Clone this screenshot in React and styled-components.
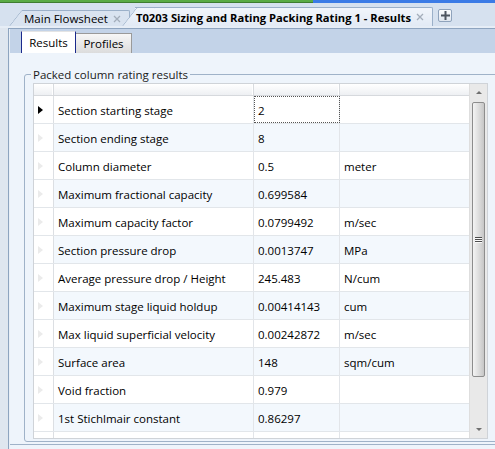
import React from 'react';
import styled, { createGlobalStyle } from 'styled-components';

const GlobalStyle = createGlobalStyle`
  html, body {
    margin: 0;
    padding: 0;
    overflow: hidden;
    background: #d6e1ef;
  }
  body {
    font-family: 'Open Sans', 'Noto Sans', sans-serif;
    font-size: 11px;
    color: #000;
  }
  * {
    box-sizing: border-box;
  }
`;

const rows = [
  { name: 'Section starting stage', value: '2', unit: '' },
  { name: 'Section ending stage', value: '8', unit: '' },
  { name: 'Column diameter', value: '0.5', unit: 'meter' },
  { name: 'Maximum fractional capacity', value: '0.699584', unit: '' },
  { name: 'Maximum capacity factor', value: '0.0799492', unit: 'm/sec' },
  { name: 'Section pressure drop', value: '0.0013747', unit: 'MPa' },
  { name: 'Average pressure drop / Height', value: '245.483', unit: 'N/cum' },
  { name: 'Maximum stage liquid holdup', value: '0.00414143', unit: 'cum' },
  { name: 'Max liquid superficial velocity', value: '0.00242872', unit: 'm/sec' },
  { name: 'Surface area', value: '148', unit: 'sqm/cum' },
  { name: 'Void fraction', value: '0.979', unit: '' },
  { name: '1st Stichlmair constant', value: '0.86297', unit: '' },
  // only the top edge of this row shows below the last full one
  { name: '', value: '', unit: '' },
];

function Close() {
  return (
    <svg width="8" height="8" viewBox="0 0 8 8">
      <path d="M1 1 L7 7 M7 1 L1 7" stroke="#a3adba" strokeWidth="1.3" />
    </svg>
  );
}

function App() {
  return (
    <>
      <GlobalStyle />
      <Window>
        <Progress>
          <Green />
          <Blue />
        </Progress>
        <DocStrip>
          <DocTab>
            Main Flowsheet
            <Close />
          </DocTab>
          <DocTab active>
            T0203 Sizing and Rating Packing Rating 1 - Results
            <Close />
          </DocTab>
          <PlusButton>
            <svg width="11" height="11" viewBox="0 0 11 11">
              <path d="M5.5 1 V10 M1 5.5 H10" stroke="#4d5560" strokeWidth="2" />
            </svg>
          </PlusButton>
        </DocStrip>
        <DocGap />
        <Body>
          <Frame>
            <TabStrip>
              <Tab selected>Results</Tab>
              <Tab>Profiles</Tab>
            </TabStrip>
            <Panel>
              <Group>
                <Legend>Packed column rating results</Legend>
                <Grid>
                  <Table>
                    <HeaderRow>
                      <HeaderCell width={20} />
                      <HeaderCell width={200} />
                      <HeaderCell width={86} />
                      <HeaderCell width={128} last />
                    </HeaderRow>
                    {rows.map((r, i) => (
                      <Row key={i} alt={i % 2 === 1}>
                        <RowHead>
                          <Marker current={i === 0} />
                        </RowHead>
                        <Cell width={200}>{r.name}</Cell>
                        <Cell width={86} focused={i === 0}>{r.value}</Cell>
                        <Cell width={128} last>{r.unit}</Cell>
                      </Row>
                    ))}
                  </Table>
                  <ScrollBar>
                    <Arrow>
                      <ArrowGlyph up />
                    </Arrow>
                    <Track>
                      <Thumb>
                        <Grip>
                          <span />
                          <span />
                          <span />
                        </Grip>
                      </Thumb>
                    </Track>
                    <Arrow>
                      <ArrowGlyph />
                    </Arrow>
                  </ScrollBar>
                </Grid>
              </Group>
              <PanelEdge />
            </Panel>
          </Frame>
        </Body>
      </Window>
    </>
  );
}

const Window = styled.div`
  width: 495px;
  height: 449px;
  display: flex;
  flex-direction: column;
  overflow: hidden;
`;

const Progress = styled.div`
  display: flex;
  height: 3px;
`;

const Green = styled.div`
  width: 313px;
  background: #5aab45;
  border-bottom: 1px solid #3e7d30;
`;

const Blue = styled.div`
  flex: 1;
  background: #3b7be6;
`;

const DocStrip = styled.div`
  height: 23px;
  display: flex;
  align-items: flex-end;
  padding-left: 22px;
  background: #d6e1ef;
`;

const DocTab = styled.div`
  position: relative;
  z-index: ${(p) => (p.active ? 2 : 1)};
  height: ${(p) => (p.active ? 19 : 16)}px;
  margin-left: ${(p) => (p.active ? 5 : 0)}px;
  padding: 0 8px 0 ${(p) => (p.active ? 1 : 2)}px;
  display: flex;
  align-items: center;
  gap: 5px;
  font-size: ${(p) => (p.active ? 11.2 : 11.5)}px;
  font-weight: ${(p) => (p.active ? 700 : 400)};
  color: #000;
  white-space: nowrap;
  background: ${(p) => (p.active ? 'linear-gradient(#f1f5fb, #e2eaf5)' : '#d9e3f0')};
  border-top: 1px solid #9bb0c9;
  border-right: 1px solid #9bb0c9;
  border-top-right-radius: 2px;

  &::before {
    content: '';
    position: absolute;
    z-index: -1;
    left: -13px;
    top: -1px;
    bottom: 0;
    width: 18px;
    background: inherit;
    border-top: 1px solid #9bb0c9;
    border-left: 1px solid #9bb0c9;
    border-top-left-radius: 2px;
    transform-origin: bottom left;
    transform: skewX(-38deg);
  }
`;

const PlusButton = styled.div`
  width: 14px;
  height: 13px;
  margin: 0 0 4px 5px;
  display: flex;
  align-items: center;
  justify-content: center;
  border: 1px solid #8fa3bc;
  border-radius: 2px;
  background: linear-gradient(#fbfcfe, #dfe6ef);
`;

const DocGap = styled.div`
  height: 2px;
  background: #e6edf6;
`;

const Body = styled.div`
  flex: 1;
  display: flex;
  padding-left: 8px;
  background: #dfe6ef;
  min-height: 0;
`;

const Frame = styled.div`
  flex: 1;
  display: flex;
  flex-direction: column;
  border-left: 1px solid #8ea4bf;
  border-top: 1px solid #8ea4bf;
  min-width: 0;
`;

const TabStrip = styled.div`
  height: 24px;
  display: flex;
  align-items: flex-end;
  padding-left: 11px;
  background: #c3d3e8;
  border-left: 1px solid #e9eff7;
`;

const Tab = styled.div`
  height: ${(p) => (p.selected ? 22 : 20)}px;
  width: ${(p) => (p.selected ? 55 : 56)}px;
  display: flex;
  align-items: center;
  justify-content: center;
  font-size: 11.5px;
  background: ${(p) => (p.selected ? '#fff' : 'linear-gradient(#f7f7f7, #dcdcdc)')};
  border: 1px solid ${(p) => (p.selected ? '#1b2a8c' : '#9a9a9a')};
  border-top-color: ${(p) => (p.selected ? '#e4e4e4' : '#9a9a9a')};
  border-bottom: none;
  border-left-width: ${(p) => (p.selected ? 1 : 0)}px;
`;

const Panel = styled.div`
  flex: 1;
  display: flex;
  flex-direction: column;
  background: #eef4fb;
  border-left: 1px solid #e9eff7;
`;

const Group = styled.fieldset`
  margin: 14px -8px 0 14px;
  padding: 1px 0 2px 8px;
  border: 1px solid #9fb2c8;
  border-radius: 3px;
  min-width: 0;
`;

const Legend = styled.legend`
  padding: 0 2px;
  margin-left: -2px;
  font-size: 11.5px;
  line-height: 15px;
  color: #1a1a1a;
`;

const Grid = styled.div`
  width: 455px;
  height: 356px;
  display: flex;
  border: 1px solid #cfd3d8;
  background: #fff;
  overflow: hidden;
`;

const Table = styled.div`
  flex: 1;
  display: flex;
  flex-direction: column;
  overflow: hidden;
`;

const HeaderRow = styled.div`
  display: flex;
  flex: none;
  height: 12px;
  border-bottom: 1px solid #d6d9dd;
  background: linear-gradient(#ffffff, #eef0f3);
`;

const HeaderCell = styled.div`
  width: ${(p) => p.width}px;
  border-right: ${(p) => (p.last ? 'none' : '1px solid #d8dbdf')};
  box-shadow: ${(p) => (p.last ? 'none' : 'inset -1px 0 0 #fff')};
`;

const Row = styled.div`
  display: flex;
  flex: none;
  height: 28px;
  border-bottom: 1px solid #e2e6ea;
  background: ${(p) => (p.alt ? '#f3f8fd' : '#ffffff')};
`;

const RowHead = styled.div`
  width: 20px;
  display: flex;
  align-items: center;
  padding: 1px 0 0 4px;
  border-right: 1px solid #dcdfe3;
  background: #fff;
`;

const Marker = styled.div`
  width: 0;
  height: 0;
  border-top: 4px solid transparent;
  border-bottom: 4px solid transparent;
  border-left: 5px solid ${(p) => (p.current ? '#000' : '#ebebeb')};
`;

const Cell = styled.div`
  width: ${(p) => p.width}px;
  display: flex;
  align-items: center;
  padding: 1px 0 0 4px;
  font-size: 11.5px;
  white-space: nowrap;
  border-right: ${(p) => (p.last ? 'none' : '1px solid #e2e5e9')};
  outline: ${(p) => (p.focused ? '1px dotted #555' : 'none')};
  outline-offset: -1px;
`;

const ScrollBar = styled.div`
  width: 18px;
  display: flex;
  flex-direction: column;
  background: #e9e9e9;
  border-left: 1px solid #dedede;
`;

const Arrow = styled.div`
  height: 17px;
  display: flex;
  align-items: center;
  justify-content: center;
`;

const ArrowGlyph = styled.div`
  width: 0;
  height: 0;
  border-left: 3px solid transparent;
  border-right: 3px solid transparent;
  ${(p) =>
    p.up ? 'border-bottom: 3px solid #6f6f6f;' : 'border-top: 3px solid #6f6f6f;'}
`;

const Track = styled.div`
  flex: 1;
  padding: 1px 2px 0 2px;
`;

const Thumb = styled.div`
  height: 275px;
  display: flex;
  align-items: center;
  justify-content: center;
  border: 1px solid #8d8d8d;
  border-radius: 2px;
  background: linear-gradient(90deg, #f4f4f4, #dcdcdc 55%, #c6c6c6);
`;

const Grip = styled.div`
  display: flex;
  flex-direction: column;
  gap: 1px;

  span {
    display: block;
    width: 7px;
    height: 1px;
    background: #4d4d4d;
    box-shadow: 0 1px 0 #fafafa;
  }
`;

const PanelEdge = styled.div`
  margin-top: 2px;
  border-top: 1px solid #9fb2c8;
`;

export default App;
